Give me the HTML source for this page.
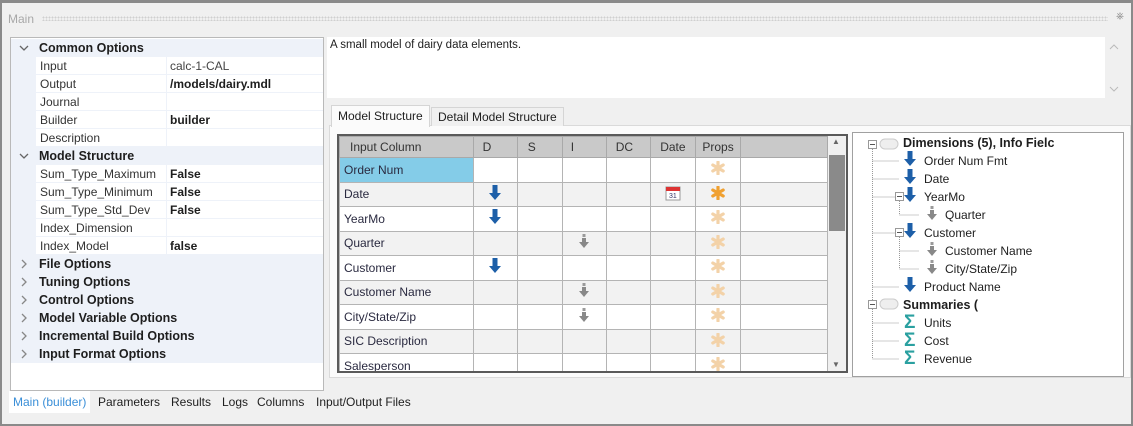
<!DOCTYPE html>
<html><head><meta charset="utf-8"><style>
*{box-sizing:border-box;margin:0;padding:0}
body{width:1133px;height:426px;overflow:hidden;background:#f0f0f0;font-family:"Liberation Sans",sans-serif;font-size:12px;color:#1e1e1e;position:relative}
.a{position:absolute}
.frame{left:0;top:0;width:1133px;height:426px;border:2px solid #8a8a8a;border-top-width:3px}
.title{left:8px;top:12px;color:#a8a8a8;font-size:12px}
.dots{left:42px;top:16px;width:1066px;height:5px;background-image:radial-gradient(#cfcfcf 40%,transparent 45%);background-size:3px 3px}
.pg{left:10px;top:37px;width:314px;height:354px;background:#fff;border:1px solid #b9b9b9}
.row{position:absolute;left:0;width:312px;height:18px;line-height:18px}
.cat{background:#eef2f9;font-weight:bold;font-size:12.5px}
.cat span{position:absolute;left:28px}
.chev{position:absolute;left:8px;top:5px}
.prop{background:#eef2f9}
.prop .n{position:absolute;left:25px;width:130px;height:17px;background:#fff;padding-left:4px;color:#333}
.prop .v{position:absolute;left:156px;width:156px;height:17px;background:#fff;padding-left:3px}
.desc{left:327px;top:37px;width:778px;height:61px;background:#fff;padding:2px 3px;font-size:11.5px}
.tabpage{left:329px;top:125px;width:802px;height:253px;background:#fbfbfb;border:1px solid #dadada}
.tab{top:105px;height:21px;line-height:20px;padding:0 6px;border:1px solid #d5d5d5;border-bottom:none;font-size:12px}
.grid{left:337px;top:134px;width:491px;height:239px;border:2px solid #5a5a5a;border-right:none;background:#fff;overflow:hidden}
table{border-collapse:collapse;font-size:12px}
td{border:1px solid #b4b4b4;height:24.5px;padding:0 4px;color:#2a2a40;text-align:center}
td:first-child{text-align:left}
tr.h td{background:#c9c9c9;height:21px;color:#333;border-color:#a9a9a9}
tr.g td{background:#f2f2f2}
.sb{left:828px;top:134px;width:20px;height:239px;background:#f0f0f0;border-top:2px solid #5a5a5a;border-bottom:2px solid #5a5a5a;border-right:2px solid #5a5a5a}
.tree{left:852px;top:132px;width:272px;height:245px;background:#fff;border:1px solid #a0a0a0;font-size:12px}
.t{position:absolute;white-space:nowrap}
.bt{top:391px;height:22px;line-height:22px;font-size:12px;padding:0 4px}
</style></head><body>
<svg width="0" height="0" style="position:absolute"><defs>
<g id="cd"><path d="M1 2 L5 6 L9 2" fill="none" stroke="#666" stroke-width="1.3"/></g>
<g id="cr"><path d="M3 1 L7 5 L3 9" fill="none" stroke="#888" stroke-width="1.3"/></g>
<g id="ba"><rect x="-2.5" y="-8" width="5" height="9" fill="#1d5fa8"/><path d="M-6 0 L6 0 L0 7 Z" fill="#1d5fa8"/></g>
<g id="ga"><rect x="-1.5" y="-7" width="3" height="3" fill="#9a9a9a"/><rect x="-2" y="-3" width="4" height="4" fill="#8a8a8a"/><path d="M-5 1 L5 1 L0 7 Z" fill="#888"/></g>
<g id="st"><g stroke="#f3d2a8" stroke-width="3.2" stroke-linecap="round"><path d="M0 -6V6M-5.2 -3L5.2 3M-5.2 3L5.2 -3"/></g></g>
<g id="sd"><g stroke="#f0a030" stroke-width="3.2" stroke-linecap="round"><path d="M0 -6V6M-5.2 -3L5.2 3M-5.2 3L5.2 -3"/></g></g>
<g id="sg"><text x="-6" y="6" font-family="Liberation Sans" font-size="19" font-weight="bold" fill="#2aa0a0">&#931;</text></g>
</defs></svg>
<div class="a frame"></div>
<div class="a title">Main</div>
<div class="a dots"></div>
<div class="a" style="left:1116px;top:11px;color:#888;font-size:10px">&#9096;</div>
<div class="a pg">
 <div class="row cat" style="top:1px"><svg class="chev" width="10" height="8"><use href="#cd"/></svg><span>Common Options</span></div>
 <div class="row prop" style="top:19px"><div class="n">Input</div><div class="v" style="color:#444">calc-1-CAL</div></div>
 <div class="row prop" style="top:37px"><div class="n">Output</div><div class="v"><b>/models/dairy.mdl</b></div></div>
 <div class="row prop" style="top:55px"><div class="n">Journal</div><div class="v"></div></div>
 <div class="row prop" style="top:73px"><div class="n">Builder</div><div class="v"><b>builder</b></div></div>
 <div class="row prop" style="top:91px"><div class="n">Description</div><div class="v"></div></div>
 <div class="row cat" style="top:109px"><svg class="chev" width="10" height="8"><use href="#cd"/></svg><span>Model Structure</span></div>
 <div class="row prop" style="top:127px"><div class="n">Sum_Type_Maximum</div><div class="v"><b>False</b></div></div>
 <div class="row prop" style="top:145px"><div class="n">Sum_Type_Minimum</div><div class="v"><b>False</b></div></div>
 <div class="row prop" style="top:163px"><div class="n">Sum_Type_Std_Dev</div><div class="v"><b>False</b></div></div>
 <div class="row prop" style="top:181px"><div class="n">Index_Dimension</div><div class="v"></div></div>
 <div class="row prop" style="top:199px"><div class="n">Index_Model</div><div class="v"><b>false</b></div></div>
 <div class="row cat" style="top:217px"><svg class="chev" style="top:4px" width="10" height="10"><use href="#cr"/></svg><span>File Options</span></div>
 <div class="row cat" style="top:235px"><svg class="chev" style="top:4px" width="10" height="10"><use href="#cr"/></svg><span>Tuning Options</span></div>
 <div class="row cat" style="top:253px"><svg class="chev" style="top:4px" width="10" height="10"><use href="#cr"/></svg><span>Control Options</span></div>
 <div class="row cat" style="top:271px"><svg class="chev" style="top:4px" width="10" height="10"><use href="#cr"/></svg><span>Model Variable Options</span></div>
 <div class="row cat" style="top:289px"><svg class="chev" style="top:4px" width="10" height="10"><use href="#cr"/></svg><span>Incremental Build Options</span></div>
 <div class="row cat" style="top:307px"><svg class="chev" style="top:4px" width="10" height="10"><use href="#cr"/></svg><span>Input Format Options</span></div>
</div>
<div class="a desc">A small model of dairy data elements.</div>
<svg class="a" style="left:1109px;top:44px" width="10" height="6"><path d="M1 5L5 1L9 5" fill="none" stroke="#bbb"/></svg>
<svg class="a" style="left:1109px;top:86px" width="10" height="6"><path d="M1 1L5 5L9 1" fill="none" stroke="#bbb"/></svg>
<div class="a tabpage"></div>
<div class="a tab" style="left:331px;background:#fbfbfb;height:22px">Model Structure</div>
<div class="a tab" style="left:431px;top:107px;height:19px;line-height:18px;background:#f0f0f0">Detail Model Structure</div>
<div class="a grid"><table>
<tr class="h"><td style="width:136px;padding-left:10px">Input Column</td><td style="width:45px;text-align:left;padding-left:9px">D</td><td style="width:46px;text-align:left;padding-left:10px">S</td><td style="width:45px;text-align:left;padding-left:8px">I</td><td style="width:45px;text-align:left;padding-left:9px">DC</td><td style="width:45px">Date</td><td style="width:46px">Props</td><td style="width:90px"></td></tr>
<tr><td style="background:#84cce8">Order Num</td><td></td><td></td><td></td><td></td><td></td><td><svg width="14" height="14" viewBox="-7 -7 14 14"><use href="#st"/></svg></td><td></td></tr>
<tr class="g"><td>Date</td><td><svg width="14" height="16" viewBox="-7 -8 14 16"><use href="#ba"/></svg></td><td></td><td></td><td></td><td><svg width="16" height="16"><rect x="1" y="2" width="14" height="13" fill="#fff" stroke="#999"/><rect x="1" y="2" width="14" height="4" fill="#d33"/><text x="4" y="13" font-size="7" fill="#336">31</text></svg></td><td><svg width="14" height="14" viewBox="-7 -7 14 14"><use href="#sd"/></svg></td><td></td></tr>
<tr><td>YearMo</td><td><svg width="14" height="16" viewBox="-7 -8 14 16"><use href="#ba"/></svg></td><td></td><td></td><td></td><td></td><td><svg width="14" height="14" viewBox="-7 -7 14 14"><use href="#st"/></svg></td><td></td></tr>
<tr class="g"><td>Quarter</td><td></td><td></td><td><svg width="12" height="15" viewBox="-6 -7 12 15"><use href="#ga"/></svg></td><td></td><td></td><td><svg width="14" height="14" viewBox="-7 -7 14 14"><use href="#st"/></svg></td><td></td></tr>
<tr><td>Customer</td><td><svg width="14" height="16" viewBox="-7 -8 14 16"><use href="#ba"/></svg></td><td></td><td></td><td></td><td></td><td><svg width="14" height="14" viewBox="-7 -7 14 14"><use href="#st"/></svg></td><td></td></tr>
<tr class="g"><td>Customer Name</td><td></td><td></td><td><svg width="12" height="15" viewBox="-6 -7 12 15"><use href="#ga"/></svg></td><td></td><td></td><td><svg width="14" height="14" viewBox="-7 -7 14 14"><use href="#st"/></svg></td><td></td></tr>
<tr><td>City/State/Zip</td><td></td><td></td><td><svg width="12" height="15" viewBox="-6 -7 12 15"><use href="#ga"/></svg></td><td></td><td></td><td><svg width="14" height="14" viewBox="-7 -7 14 14"><use href="#st"/></svg></td><td></td></tr>
<tr class="g"><td>SIC Description</td><td></td><td></td><td></td><td></td><td></td><td><svg width="14" height="14" viewBox="-7 -7 14 14"><use href="#st"/></svg></td><td></td></tr>
<tr><td>Salesperson</td><td></td><td></td><td></td><td></td><td></td><td><svg width="14" height="14" viewBox="-7 -7 14 14"><use href="#st"/></svg></td><td></td></tr>
</table></div>
<div class="a sb"><div class="a" style="left:4px;top:1px;color:#666;font-size:8px">&#9650;</div><div class="a" style="left:1px;top:19px;width:16px;height:76px;background:#8a8a8a"></div><div class="a" style="left:4px;top:224px;color:#666;font-size:8px">&#9660;</div></div>
<div class="a tree">
<svg class="a" style="left:0;top:0" width="272" height="245">
<g stroke="#999" stroke-dasharray="1 1" fill="none">
<path d="M19.5 12V172M19.5 28H46M19.5 46H46M19.5 64H46M19.5 100H46M19.5 154H46"/>
<path d="M46.5 64V82H66M46.5 100V136H66M46.5 118H66"/>
<path d="M19.5 172V226M19.5 190H46M19.5 208H46M19.5 226H46"/>
</g>
<g fill="#fff" stroke="#999"><rect x="15.5" y="7.5" width="8" height="8"/><rect x="15.5" y="167.5" width="8" height="8"/><rect x="42.5" y="59.5" width="8" height="8"/><rect x="42.5" y="95.5" width="8" height="8"/></g>
<g stroke="#555"><path d="M17 11.5H22M17 171.5H22M44 63.5H49M44 99.5H49"/></g>
<g fill="#eee" stroke="#ccc"><rect x="27" y="6" width="18" height="10" rx="5"/><rect x="27" y="166" width="18" height="10" rx="5"/></g>
<use href="#ba" x="57" y="26"/><use href="#ba" x="57" y="44"/><use href="#ba" x="57" y="62"/><use href="#ba" x="57" y="98"/><use href="#ba" x="57" y="152"/>
<use href="#ga" x="79" y="80"/><use href="#ga" x="79" y="116"/><use href="#ga" x="79" y="134"/>
<use href="#sg" x="57" y="189"/><use href="#sg" x="57" y="207"/><use href="#sg" x="57" y="225"/>
</svg>
<div class="t" style="left:50px;top:3px;font-weight:bold;font-size:12.5px">Dimensions (5), Info Fielc</div>
<div class="t" style="left:71px;top:21px">Order Num Fmt</div>
<div class="t" style="left:71px;top:39px">Date</div>
<div class="t" style="left:71px;top:57px">YearMo</div>
<div class="t" style="left:92px;top:75px">Quarter</div>
<div class="t" style="left:71px;top:93px">Customer</div>
<div class="t" style="left:92px;top:111px">Customer Name</div>
<div class="t" style="left:92px;top:129px">City/State/Zip</div>
<div class="t" style="left:71px;top:147px">Product Name</div>
<div class="t" style="left:50px;top:165px;font-weight:bold;font-size:12.5px">Summaries (</div>
<div class="t" style="left:71px;top:183px">Units</div>
<div class="t" style="left:71px;top:201px">Cost</div>
<div class="t" style="left:71px;top:219px">Revenue</div>
</div>
<div class="a bt" style="left:9px;background:#fff;color:#3a8fd8">Main (builder)</div>
<div class="a bt" style="left:94px">Parameters</div>
<div class="a bt" style="left:167px">Results</div>
<div class="a bt" style="left:218px">Logs</div>
<div class="a bt" style="left:253px">Columns</div>
<div class="a bt" style="left:312px">Input/Output Files</div>
</body></html>
